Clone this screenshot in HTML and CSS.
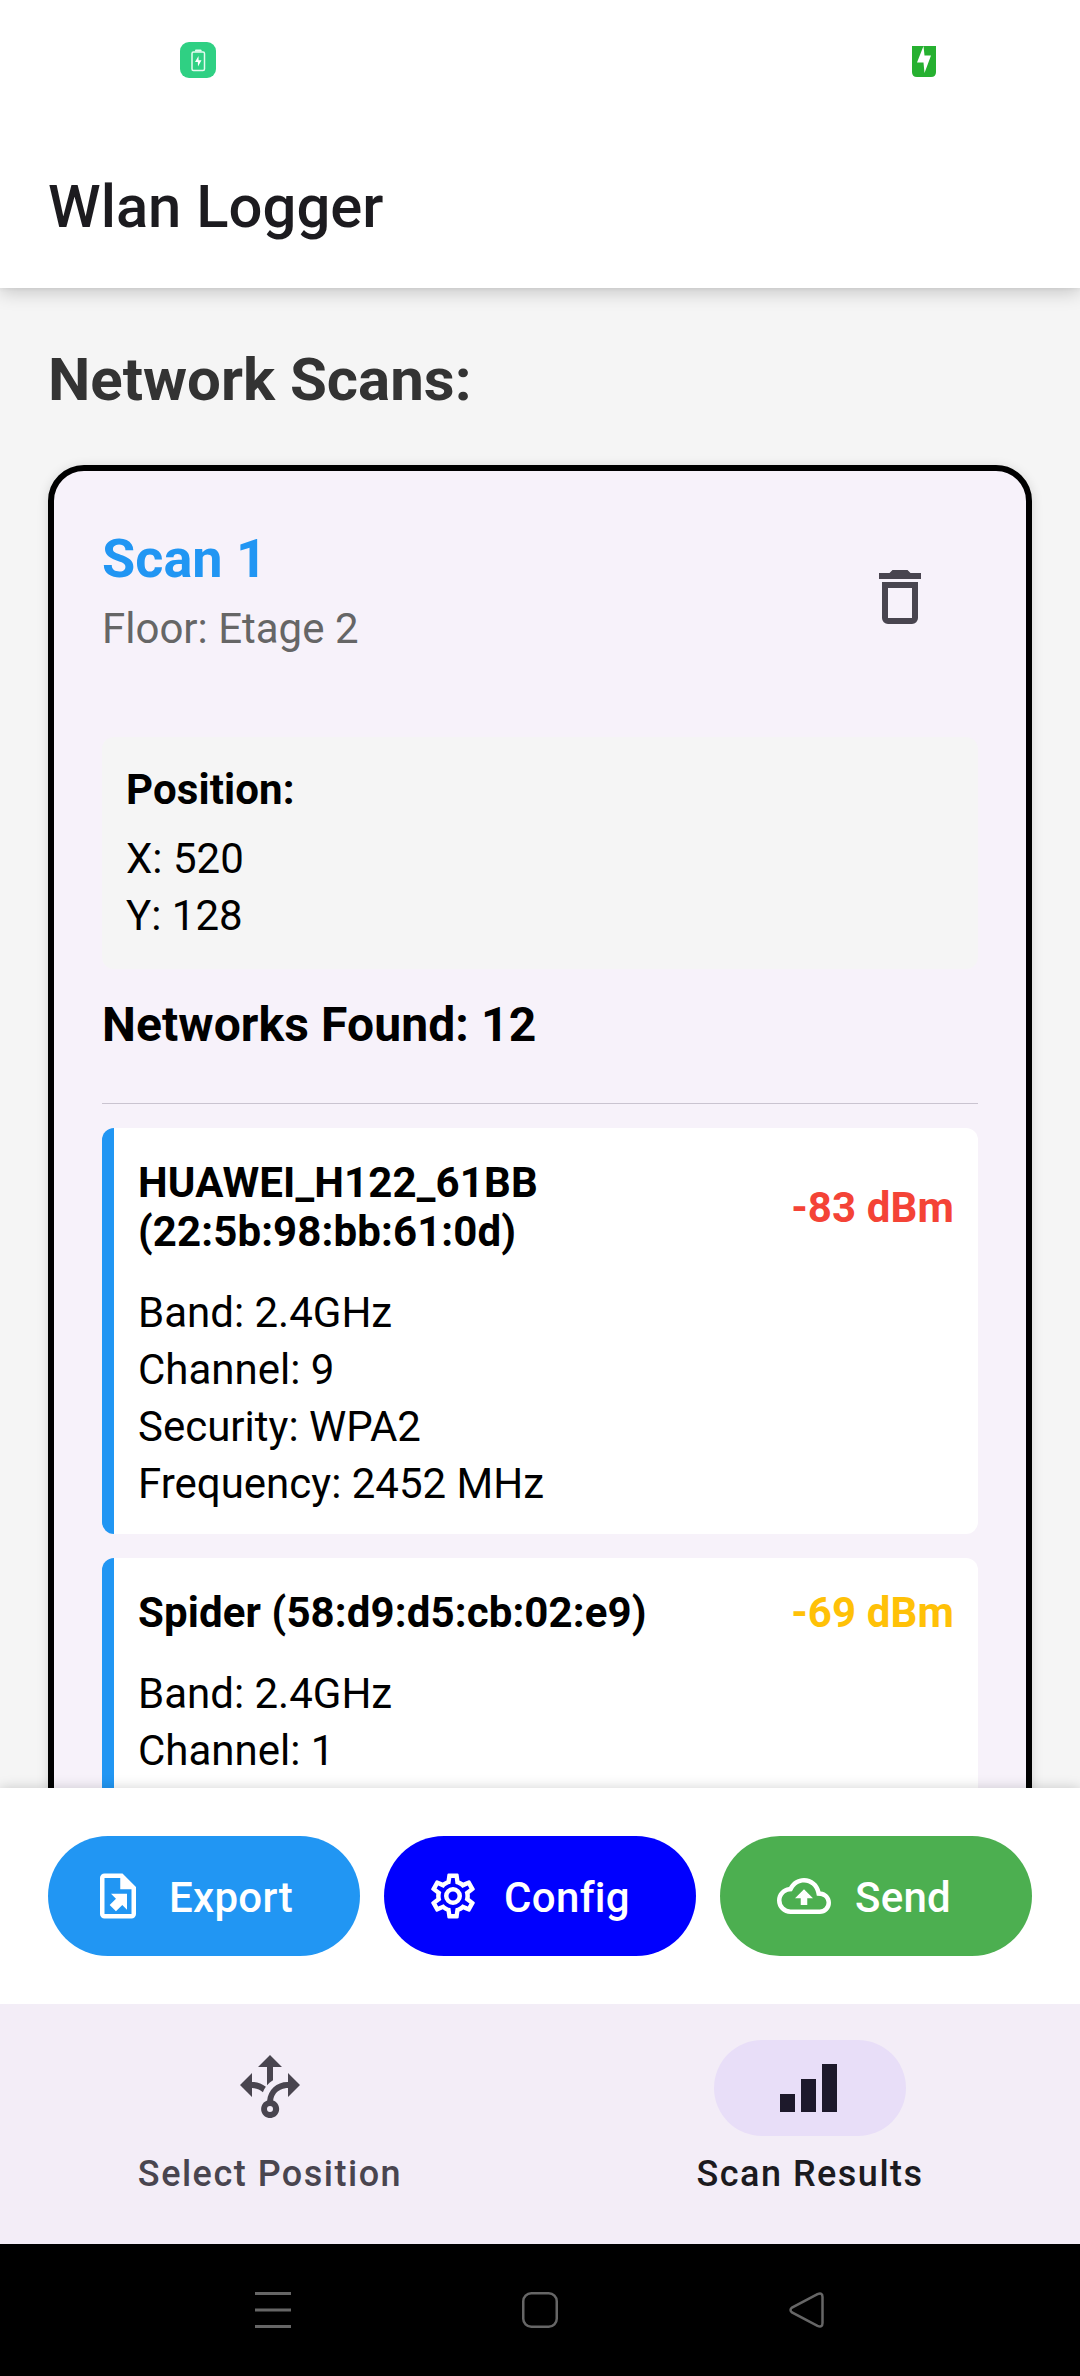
FILE: index.html
```html
<!DOCTYPE html>
<html lang="en">
<head>
<meta charset="utf-8">
<title>Wlan Logger</title>
<link rel="stylesheet" href="styles.css">
</head>
<body>
<div class="screen">
  <header class="top">
    <div class="status">
      <svg class="status-app" viewBox="0 0 36 36"><rect width="36" height="36" rx="9" fill="#2fd083"/><rect x="12" y="10" width="12.5" height="18.5" rx="1.5" fill="none" stroke="#e4fbef" stroke-width="1.5"/><path d="M15 9.5V8.200Q15 7.500 16 7.500H20.500Q21.500 7.500 21.500 8.200V9.500Z" fill="#e4fbef"/><path d="M18.500 14L15 20H17.800L18 24.500L21.500 18.300H18.600Z" fill="#fff"/></svg>
      <svg class="status-battery" viewBox="0 0 24 31"><path d="M0 0H24V26Q24 31 19 31H5Q0 31 0 26Z" fill="#26b030"/><path d="M11.500 0L5 16.500H11.500L12.500 27L19 9.500H12.500Z" fill="#fff"/></svg>
    </div>
    <h1 class="app-title">Wlan Logger</h1>
  </header>

  <main class="content">
    <h2 class="heading">Network Scans:</h2>
    <section class="scan">
      <div class="scan-head">
        <div>
          <h3 class="scan-name">Scan 1</h3>
          <p class="floor">Floor: Etage 2</p>
        </div>
        <svg class="delete" viewBox="0 0 24 24"><path d="M6,19A2,2 0 0,0 8,21H16A2,2 0 0,0 18,19V7H6V19M8,9H16V19H8V9M15.5,4L14.5,3H9.5L8.5,4H5V6H19V4H15.5Z"/></svg>
      </div>
      <div class="position">
        <p class="line strong">Position:</p>
        <p class="line">X: 520</p>
        <p class="line">Y: 128</p>
      </div>
      <h4 class="found">Networks Found: 12</h4>
      <div class="network">
        <div class="network-head">
          <p class="ssid">HUAWEI_H122_61BB (22:5b:98:bb:61:0d)</p>
          <p class="signal weak">-83 dBm</p>
        </div>
        <p class="line">Band: 2.4GHz</p>
        <p class="line">Channel: 9</p>
        <p class="line">Security: WPA2</p>
        <p class="line">Frequency: 2452 MHz</p>
      </div>
      <div class="network">
        <div class="network-head">
          <p class="ssid">Spider (58:d9:d5:cb:02:e9)</p>
          <p class="signal fair">-69 dBm</p>
        </div>
        <p class="line">Band: 2.4GHz</p>
        <p class="line">Channel: 1</p>
      </div>
    </section>
  </main>

  <div class="actions">
    <button class="action export"><svg viewBox="0 0 24 24"><path d="M14,2H6A2,2 0 0,0 4,4V20A2,2 0 0,0 6,22H18A2,2 0 0,0 20,20V8L14,2M18,20H6V4H13V9H18V20M16,11V18.1L13.9,16L11.1,18.8L8.3,16L11.1,13.2L8.9,11H16Z"/></svg><span>Export</span></button>
    <button class="action config"><svg viewBox="0 0 24 24"><path d="M12,8A4,4 0 0,1 16,12A4,4 0 0,1 12,16A4,4 0 0,1 8,12A4,4 0 0,1 12,8M12,10A2,2 0 0,0 10,12A2,2 0 0,0 12,14A2,2 0 0,0 14,12A2,2 0 0,0 12,10M10,22C9.75,22 9.54,21.82 9.5,21.58L9.13,18.93C8.5,18.68 7.96,18.34 7.44,17.94L4.95,18.95C4.73,19.03 4.46,18.95 4.34,18.73L2.34,15.27C2.21,15.05 2.27,14.78 2.46,14.63L4.57,12.97L4.5,12L4.57,11L2.46,9.37C2.27,9.22 2.21,8.95 2.34,8.73L4.34,5.27C4.46,5.05 4.73,4.96 4.95,5.05L7.44,6.05C7.96,5.66 8.5,5.32 9.13,5.07L9.5,2.42C9.54,2.18 9.75,2 10,2H14C14.25,2 14.46,2.18 14.5,2.42L14.87,5.07C15.5,5.32 16.04,5.66 16.56,6.05L19.05,5.05C19.27,4.96 19.54,5.05 19.66,5.27L21.66,8.73C21.79,8.95 21.73,9.22 21.54,9.37L19.43,11L19.5,12L19.43,13L21.54,14.63C21.73,14.78 21.79,15.05 21.66,15.27L19.66,18.73C19.54,18.95 19.27,19.04 19.05,18.95L16.56,17.95C16.04,18.34 15.5,18.68 14.87,18.93L14.5,21.58C14.46,21.82 14.25,22 14,22H10M11.25,4L10.88,6.61C9.68,6.86 8.62,7.5 7.85,8.39L5.44,7.35L4.69,8.65L6.8,10.2C6.4,11.37 6.4,12.64 6.8,13.8L4.68,15.36L5.43,16.66L7.86,15.62C8.63,16.5 9.68,17.14 10.87,17.38L11.24,20H12.76L13.13,17.39C14.32,17.14 15.37,16.5 16.14,15.62L18.57,16.66L19.32,15.36L17.2,13.81C17.6,12.64 17.6,11.37 17.2,10.2L19.31,8.65L18.56,7.35L16.15,8.39C15.38,7.5 14.32,6.86 13.12,6.62L12.75,4H11.25Z"/></svg><span>Config</span></button>
    <button class="action send"><svg viewBox="0 0 24 24"><path d="M19.35,10.03C18.67,6.59 15.64,4 12,4C9.11,4 6.6,5.64 5.35,8.03C2.34,8.36 0,10.9 0,14A6,6 0 0,0 6,20H19A5,5 0 0,0 24,15C24,12.36 21.95,10.22 19.35,10.03M19,18H6A4,4 0 0,1 2,14C2,11.95 3.53,10.24 5.56,10.03L6.63,9.92L7.13,8.97C8.08,7.14 9.94,6 12,6C14.62,6 16.88,7.86 17.39,10.43L17.69,11.93L19.22,12.04C20.78,12.14 22,13.45 22,15A3,3 0 0,1 19,18M8,13H10.55V16H13.45V13H16L12,9L8,13Z"/></svg><span>Send</span></button>
  </div>

  <nav class="tabs">
    <div class="tab">
      <div class="pill"><svg viewBox="0 0 24 24"><path d="M9.64,13.4C8.63,12.5 7.34,12.03 6,12V15L2,11L6,7V10C7.67,10 9.3,10.57 10.63,11.59C10.22,12.15 9.89,12.76 9.64,13.4M18,15V12C17.5,12 13.5,12.16 13.05,16.2C14.61,16.75 15.43,18.47 14.88,20.03C14.33,21.59 12.61,22.41 11.05,21.86C9.5,21.3 8.67,19.59 9.22,18.03C9.5,17.17 10.2,16.5 11.05,16.2C11.34,12.61 14.4,9.88 18,10V7L22,11L18,15M13,19A1,1 0 0,0 12,18A1,1 0 0,0 11,19A1,1 0 0,0 12,20A1,1 0 0,0 13,19M11,11.12C11.58,10.46 12.25,9.89 13,9.43V5H16L12,1L8,5H11V11.12Z"/></svg></div>
      <span>Select Position</span>
    </div>
    <div class="tab active">
      <div class="pill"><svg viewBox="0 0 24 24"><path d="M2 14H7V20H2ZM9 9H14V20H9ZM16 4H21V20H16Z"/></svg></div>
      <span>Scan Results</span>
    </div>
  </nav>

  <div class="system">
    <svg class="sys-menu" viewBox="0 0 36 36"><path d="M0 1.500H36M0 18H36M0 34.500H36"/></svg>
    <svg class="sys-home" viewBox="0 0 36 36"><rect x="1.250" y="1.250" width="33.500" height="33.500" rx="8"/></svg>
    <svg class="sys-back" viewBox="0 0 36 36"><path d="M28.500 2.200L3 15.600Q0 18 3 20.400L28.500 33.800Q33.500 36 33.500 31V5Q33.500 0 28.500 2.200Z"/></svg>
  </div>
</div>
</body>
</html>
```

FILE: styles.css
```css
* { box-sizing: border-box; margin: 0; padding: 0; }

body {
  width: 1080px;
  height: 2376px;
  overflow: hidden;
  font-family: Roboto, "Liberation Sans", sans-serif;
  color: #000;
}

svg { display: block; flex: none; }

.screen { display: flex; flex-direction: column; height: 2376px; }

.top {
  height: 288px;
  flex: none;
  background: #fff;
  z-index: 2;
  box-shadow: 0 4px 18px rgba(0, 0, 0, .2), 0 1px 4px rgba(0, 0, 0, .05);
}

.status {
  height: 96px;
  padding: 42px 144px 0 180px;
  display: flex;
  justify-content: space-between;
}
.status-app { width: 36px; height: 36px; }
.status-battery { width: 24px; height: 31px; margin-top: 4px; }

.app-title {
  height: 192px;
  padding: 0 48px;
  line-height: 222px;
  font-size: 59.8px;
  font-weight: 500;
  color: #1c1b1f;
}

.content {
  flex: 1;
  min-height: 0;
  overflow: hidden;
  background: #f5f5f5;
  padding: 48px 48px 0;
}

.heading {
  font-size: 60px;
  line-height: 87px;
  height: 129px;
  font-weight: 700;
  color: #333;
}

.scan {
  height: 2400px;
  border: 6px solid #000;
  border-radius: 36px;
  background: #f7f2fa;
  padding: 48px;
  box-shadow: 0 2px 12px rgba(0, 0, 0, .14);
}

.scan-head {
  display: flex;
  justify-content: space-between;
  height: 218px;
}
.scan-name { font-size: 54px; line-height: 72px; font-weight: 700; color: #2196f3; margin-top: 4px; }
.floor { font-size: 42px; line-height: 60px; color: #666; margin-top: 4px; }
.delete { width: 72px; height: 72px; margin: 42px 42px 0 0; fill: #49454f; }

.position {
  height: 232px;
  padding: 24px;
  border-radius: 12px;
  background: #f5f5f5;
}
.line { font-size: 42px; line-height: 57px; }
.strong { font-weight: 700; letter-spacing: .12px; margin-bottom: 12px; }

.found {
  height: 135px;
  padding-top: 23px;
  line-height: 66px;
  font-size: 48px;
  letter-spacing: .1px;
  font-weight: 700;
  border-bottom: 1px solid #cac4d0;
  margin-bottom: 24px;
}

.network {
  border-left: 12px solid #2196f3;
  border-radius: 12px;
  background: #fff;
  padding: 26px 24px 22px;
  margin-bottom: 24px;
}
.network-head {
  display: flex;
  justify-content: space-between;
  align-items: center;
  padding: 4px 0;
  margin-bottom: 24px;
  font-size: 42px;
  line-height: 49px;
  font-weight: 700;
  letter-spacing: .12px;
}
.ssid { width: 600px; padding-right: 80px; }
.signal { white-space: nowrap; }
.weak { color: #f44336; }
.fair { color: #ffc107; }

.actions {
  height: 216px;
  flex: none;
  padding: 48px;
  display: grid;
  grid-template-columns: repeat(3, 1fr);
  gap: 24px;
  background: #fff;
  z-index: 1;
  box-shadow: 0 0 12px rgba(0, 0, 0, .18);
}
.action {
  border: 0;
  border-radius: 60px;
  height: 120px;
  padding-right: 24px;
  display: flex;
  align-items: center;
  justify-content: center;
  gap: 24px;
  font: 500 42px/60px Roboto, "Liberation Sans", sans-serif;
  letter-spacing: .3px;
  color: #fff;
}
.action svg { width: 54px; height: 54px; fill: #fff; }
.action span { padding-top: 4px; }
.export { background: #2196f3; }
.config { background: #00f; }
.send { background: #4caf50; }

.tabs {
  height: 240px;
  flex: none;
  display: grid;
  grid-template-columns: 1fr 1fr;
  background: #f3edf7;
  z-index: 2;
}
.tab {
  display: flex;
  flex-direction: column;
  align-items: center;
  padding-top: 36px;
  color: #49454f;
  font-size: 36px;
  line-height: 48px;
  font-weight: 500;
  letter-spacing: 1.5px;
}
.tab span { margin-top: 14px; }
.pill {
  width: 192px;
  height: 96px;
  border-radius: 48px;
  display: grid;
  place-items: center;
}
.pill svg { width: 72px; height: 72px; fill: #49454f; }
.active { color: #1c1b1f; }
.active .pill { background: #e8def8; }
.active .pill svg { fill: #1d192b; }

.system {
  height: 132px;
  flex: none;
  display: flex;
  align-items: center;
  justify-content: space-between;
  padding: 0 255px;
  background: #000;
}
.system svg { width: 36px; height: 36px; fill: none; stroke: #666; stroke-width: 2.5; }
.system .sys-menu { stroke-width: 3; }
```
